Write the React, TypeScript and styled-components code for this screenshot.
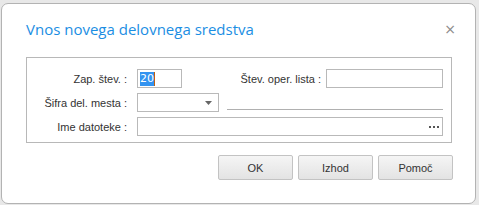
import React from "react";
import styled, { createGlobalStyle } from "styled-components";

const Global = createGlobalStyle`
  html, body { margin: 0; padding: 0; background: #e8e8e8; }
  body { font-family: "Liberation Sans", Arial, sans-serif; }
`;

const Page = styled.div`
  width: 479px;
  height: 205px;
  box-sizing: border-box;
  padding: 3px 3px 1px 1px;
`;

const Dialog = styled.div`
  box-sizing: border-box;
  width: 475px;
  height: 201px;
  background: #ffffff;
  border: 1px solid #b3b3b3;
  border-radius: 7px;
  display: flex;
  flex-direction: column;
  padding: 0 22px 0 24px;
`;

const Header = styled.div`
  height: 53px;
  display: flex;
  align-items: center;
  justify-content: space-between;
  padding-bottom: 4px;
  box-sizing: border-box;
`;

const Title = styled.div`
  font-family: "Open Sans", "Noto Sans", sans-serif;
  font-size: 15px;
  color: #1b8ee3;
`;

const Close = styled.div`
  font-family: "DejaVu Sans", sans-serif;
  font-size: 14px;
  color: #8a8a8a;
  margin-right: -3px;
`;

const Box = styled.div`
  margin-right: 1px;
  border: 1px solid #b8b8b8;
  padding: 11px 8px 6px 0;
  display: flex;
  flex-direction: column;
  gap: 5px;
`;

const Row = styled.div`
  display: flex;
  align-items: center;
  height: 19px;
`;

const Label = styled.div<{ $w?: number }>`
  width: ${(p) => (p.$w ? `${p.$w}px` : "auto")};
  text-align: right;
  font-size: 11px;
  color: #333333;
  white-space: nowrap;
  margin-right: ${(p) => (p.$w ? 10 : 5)}px;
  flex-shrink: 0;
`;

const Field = styled.div<{ $w?: number }>`
  box-sizing: border-box;
  height: 19px;
  width: ${(p) => (p.$w ? `${p.$w}px` : "auto")};
  flex: ${(p) => (p.$w ? "0 0 auto" : "1 1 auto")};
  border: 1px solid #b9b9b9;
  background: #fff;
  display: flex;
  align-items: center;
  padding: 0 2px;
  font-size: 11px;
  color: #000;
`;

const Selected = styled.span`
  background: #3393f0;
  color: #ffffff;
  font-family: "DejaVu Sans", sans-serif;
  font-size: 11px;
  line-height: 14px;
`;

const Caret = styled.span`
  display: inline-block;
  width: 1px;
  height: 14px;
  background: #c06010;
`;

const Spacer = styled.div`
  flex: 1;
`;

const Arrow = styled.svg`
  margin-left: auto;
  margin-right: 4px;
`;

const Line = styled.div`
  flex: 1;
  align-self: flex-end;
  height: 1px;
  background: #b0b0b0;
  margin: 0 0 2px 8px;
`;

const Dots = styled.svg`
  margin-left: auto;
  margin-right: 1px;
`;

const Buttons = styled.div`
  display: flex;
  justify-content: flex-end;
  gap: 5px;
  margin-top: 12px;
`;

const Button = styled.button`
  width: 75px;
  height: 25px;
  border: 1px solid #c3c3c3;
  border-radius: 2px;
  background: linear-gradient(#f5f5f5, #e3e3e3);
  font-family: "Liberation Sans", Arial, sans-serif;
  font-size: 11px;
  color: #333;
  padding: 0;
`;

export default function App() {
  return (
    <>
      <Global />
      <Page>
        <Dialog>
          <Header>
            <Title>Vnos novega delovnega sredstva</Title>
            <Close>×</Close>
          </Header>
          <Box>
            <Row>
              <Label $w={100}>Zap. štev. :</Label>
              <Field $w={45}>
                <Selected>20</Selected>
                <Caret />
              </Field>
              <Spacer />
              <Label>Štev. oper. lista :</Label>
              <Field $w={117} />
            </Row>
            <Row>
              <Label $w={100}>Šifra del. mesta :</Label>
              <Field $w={82}>
                <Arrow width="7" height="4" viewBox="0 0 7 4">
                  <path d="M0 0H7L3.5 4Z" fill="#666" />
                </Arrow>
              </Field>
              <Line />
            </Row>
            <Row>
              <Label $w={100}>Ime datoteke :</Label>
              <Field>
                <Dots width="10" height="2" viewBox="0 0 10 2">
                  <rect x="0" y="0" width="2" height="2" fill="#555" />
                  <rect x="4" y="0" width="2" height="2" fill="#555" />
                  <rect x="8" y="0" width="2" height="2" fill="#555" />
                </Dots>
              </Field>
            </Row>
          </Box>
          <Buttons>
            <Button>OK</Button>
            <Button>Izhod</Button>
            <Button>Pomoč</Button>
          </Buttons>
        </Dialog>
      </Page>
    </>
  );
}
